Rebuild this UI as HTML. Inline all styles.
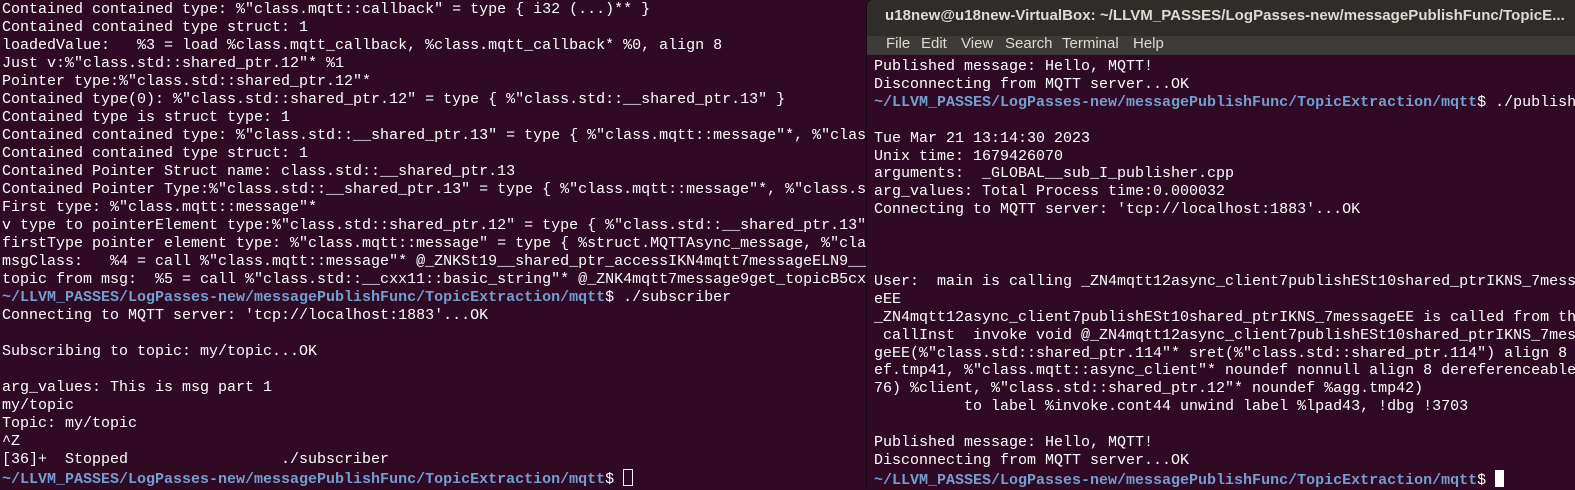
<!DOCTYPE html>
<html><head><style>
html,body{margin:0;padding:0;width:1575px;height:489px;overflow:hidden;background:#300a24}
.t{font-family:"Liberation Mono","DejaVu Sans Mono",monospace;font-size:15px;color:#ffffff;white-space:pre;margin:0}
#left{position:absolute;left:2px;top:1px;width:864px;height:489px;overflow:hidden;line-height:18px}
#right{position:absolute;left:866px;top:0;width:709px;height:489px;background:#300a24;border-left:1px solid #1a0614;border-top-left-radius:6px;overflow:hidden}
#title{height:36px;background:#2e2d29;color:#dfdbd2;font-family:"Liberation Sans","DejaVu Sans",sans-serif;font-weight:bold;font-size:15px;letter-spacing:0.05px;line-height:31px;padding-left:18px;white-space:nowrap;overflow:hidden;border-top-left-radius:6px}
#menu{position:relative;height:19px;background:#3c3b37;color:#dfdbd2;font-family:"Liberation Sans","DejaVu Sans",sans-serif;font-size:15px;line-height:16px}
#menu span{position:absolute;top:0}
#rc{position:absolute;left:7px;top:58px;line-height:17.9px}
b{color:#729fcf;font-weight:bold}
.cur{display:inline-block;width:10px;height:17px;border:1px solid #fff;box-sizing:border-box;vertical-align:-3px}
.curf{display:inline-block;width:9px;height:17px;background:#fff;vertical-align:-3px}
</style></head><body>
<div id="left" class="t">Contained contained type: %"class.mqtt::callback" = type { i32 (...)** }
Contained contained type struct: 1
loadedValue:   %3 = load %class.mqtt_callback, %class.mqtt_callback* %0, align 8
Just v:%"class.std::shared_ptr.12"* %1
Pointer type:%"class.std::shared_ptr.12"*
Contained type(0): %"class.std::shared_ptr.12" = type { %"class.std::__shared_ptr.13" }
Contained type is struct type: 1
Contained contained type: %"class.std::__shared_ptr.13" = type { %"class.mqtt::message"*, %"class.std::__shared_count" }
Contained contained type struct: 1
Contained Pointer Struct name: class.std::__shared_ptr.13
Contained Pointer Type:%"class.std::__shared_ptr.13" = type { %"class.mqtt::message"*, %"class.std::__shared_count" }
First type: %"class.mqtt::message"*
v type to pointerElement type:%"class.std::shared_ptr.12" = type { %"class.std::__shared_ptr.13" }
firstType pointer element type: %"class.mqtt::message" = type { %struct.MQTTAsync_message, %"class.std::string" }
msgClass:   %4 = call %"class.mqtt::message"* @_ZNKSt19__shared_ptr_accessIKN4mqtt7messageELN9__gnu_cxx12_Lock_policyE2ELb0ELb0EEptEv
topic from msg:  %5 = call %"class.std::__cxx11::basic_string"* @_ZNK4mqtt7message9get_topicB5cxx11Ev
<b>~/LLVM_PASSES/LogPasses-new/messagePublishFunc/TopicExtraction/mqtt</b>$ ./subscriber
Connecting to MQTT server: 'tcp://localhost:1883'...OK

Subscribing to topic: my/topic...OK

arg_values: This is msg part 1
my/topic
Topic: my/topic
^Z
[36]+  Stopped                 ./subscriber
<b>~/LLVM_PASSES/LogPasses-new/messagePublishFunc/TopicExtraction/mqtt</b>$ <span class="cur"></span></div>
<div id="right">
<div id="title">u18new@u18new-VirtualBox: ~/LLVM_PASSES/LogPasses-new/messagePublishFunc/TopicE...</div>
<div id="menu"><span style="left:19px">File</span><span style="left:54px">Edit</span><span style="left:94px">View</span><span style="left:138px">Search</span><span style="left:195px">Terminal</span><span style="left:266px">Help</span></div>
<div id="rc" class="t">Published message: Hello, MQTT!
Disconnecting from MQTT server...OK
<b>~/LLVM_PASSES/LogPasses-new/messagePublishFunc/TopicExtraction/mqtt</b>$ ./publisher

Tue Mar 21 13:14:30 2023
Unix time: 1679426070
arguments:  _GLOBAL__sub_I_publisher.cpp
arg_values: Total Process time:0.000032
Connecting to MQTT server: 'tcp://localhost:1883'...OK



User:  main is calling _ZN4mqtt12async_client7publishESt10shared_ptrIKNS_7messag
eEE
_ZN4mqtt12async_client7publishESt10shared_ptrIKNS_7messageEE is called from the
 callInst  invoke void @_ZN4mqtt12async_client7publishESt10shared_ptrIKNS_7messa
geEE(%"class.std::shared_ptr.114"* sret(%"class.std::shared_ptr.114") align 8 %r
ef.tmp41, %"class.mqtt::async_client"* noundef nonnull align 8 dereferenceable(4
76) %client, %"class.std::shared_ptr.12"* noundef %agg.tmp42)
          to label %invoke.cont44 unwind label %lpad43, !dbg !3703

Published message: Hello, MQTT!
Disconnecting from MQTT server...OK
<b>~/LLVM_PASSES/LogPasses-new/messagePublishFunc/TopicExtraction/mqtt</b>$ <span class="curf"></span></div>
</div>
</body></html>
